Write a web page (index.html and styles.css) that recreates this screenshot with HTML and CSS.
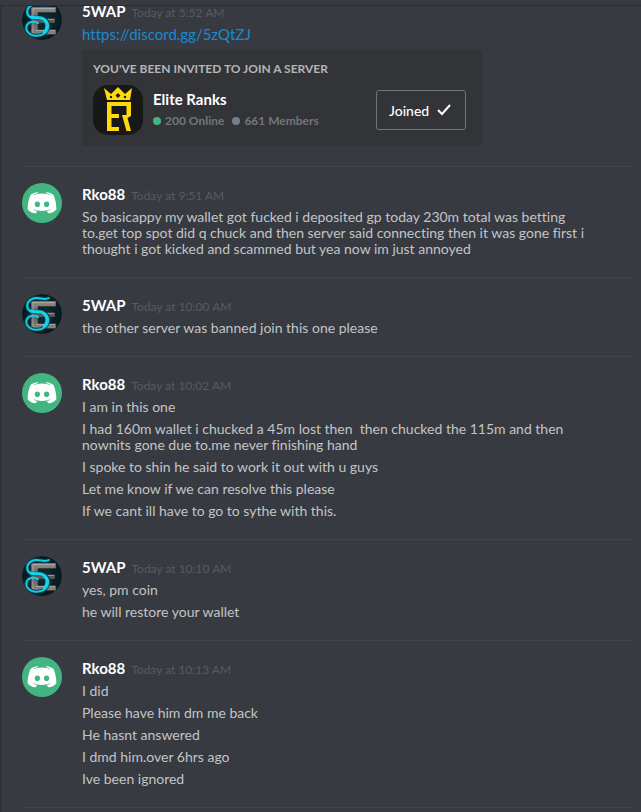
FILE: index.html
```
<!DOCTYPE html>
<html lang="en">
<head>
<meta charset="utf-8">
<meta name="viewport" content="width=device-width, initial-scale=1">
<title>Direct messages</title>
<link rel="stylesheet" href="styles.css">
</head>
<body>
<svg class="sprites" aria-hidden="true">
  <defs>
    <linearGradient id="steel" x1="0" y1="0" x2="0" y2="1">
      <stop offset="0" stop-color="#94918d"/>
      <stop offset=".5" stop-color="#5a5856"/>
      <stop offset="1" stop-color="#8a8681"/>
    </linearGradient>
    <radialGradient id="night">
      <stop offset="0" stop-color="#0a3039"/>
      <stop offset="1" stop-color="#06191f"/>
    </radialGradient>
    <clipPath id="round"><circle cx="20" cy="20" r="20"/></clipPath>
  </defs>
  <symbol id="swap" viewBox="0 0 40 40">
    <g clip-path="url(#round)">
      <circle cx="20" cy="20" r="20" fill="url(#night)"/>
      <path d="M9 7H34V12.500H16V18.500H33V23H16V29.500H34V34.500H9Z" fill="url(#steel)" stroke="#302e2d" stroke-width=".6"/>
      <path d="M11 8.500H33M18 19.500H32M14 30.500H33M11 9V33" fill="none" stroke="#c0bbb4" stroke-width="1" opacity=".6"/>
      <path d="M27 4C22 7 16 2 10 5C4 8 4 14 8 17C12 19 18 16 22 19C27 22 28 28 23 33C18 37 9 37 5 31C3 27 5 23 9 22" fill="none" stroke="#07414e" stroke-width="4"/>
      <path d="M27 4C22 7 16 2 10 5C4 8 4 14 8 17C12 19 18 16 22 19C27 22 28 28 23 33C18 37 9 37 5 31C3 27 5 23 9 22C12 21 14 22 16 23" fill="none" stroke="#14cbe3" stroke-width="2" stroke-linecap="round"/>
      <path d="M9 17C15 19 18 16 22 19.500C26 23 26 28 22 32.500" fill="none" stroke="#17d2ea" stroke-width="3" stroke-linecap="round"/>
    </g>
  </symbol>
  <symbol id="clyde" viewBox="0 0 40 40">
    <circle cx="20" cy="20" r="20" fill="#43b581"/>
    <path d="M15.800 9.300C12.700 9.500 10.200 10.600 8.500 11.900C6.700 16 5.600 20.800 5.600 26.300C7.200 28.700 9.900 30.200 13.700 30.300L15.200 28.200C13.400 27.700 12 26.900 11 25.700C16.500 28.600 23.500 28.600 29 25.700C28 26.900 26.600 27.700 24.800 28.200L26.300 30.300C30.100 30.200 32.800 28.700 34.400 26.300C34.400 20.800 33.300 16 31.500 11.900C29.800 10.600 27.300 9.500 24.200 9.300L23.800 9.900C26.100 10.400 27.800 11.200 29.300 12.400C23.500 9.700 16.500 9.700 10.700 12.400C12.200 11.200 13.900 10.400 16.200 9.900Z" fill="#fff"/>
    <ellipse cx="15.400" cy="21.200" rx="2.600" ry="2.800" fill="#43b581"/>
    <ellipse cx="24.600" cy="21.200" rx="2.600" ry="2.800" fill="#43b581"/>
  </symbol>
</svg>

<header class="topbar"></header>
<main class="chat">
  <article class="group">
    <svg class="avatar" role="img" aria-label="5WAP"><use href="#swap"/></svg>
    <div class="body">
      <h2 class="head"><span class="name">5WAP</span><time class="time">Today at 5:52 AM</time></h2>
      <p class="text"><a class="link" href="https://discord.gg/5zQtZJ">https://discord.gg/5zQtZJ</a></p>
      <section class="invite">
        <h3 class="invite-title">You've been invited to join a server</h3>
        <div class="invite-row">
          <svg class="server-icon" viewBox="0 0 50 50" role="img" aria-label="Elite Ranks">
            <rect width="50" height="50" rx="15" fill="#181818"/>
            <path d="M11 3L18 9L25 2L32 9L39 3L37 15H14Z" fill="#fed90b"/>
            <path d="M25 8L27.500 10.500L25 13L22.500 10.500Z" fill="#181818"/>
            <circle cx="18" cy="12" r="1.200" fill="#181818"/>
            <circle cx="32" cy="12" r="1.200" fill="#181818"/>
            <path d="M14 17H38V31L34.500 33L38 46H33.500L29 30H33.500V21H18.500V29H26V33H18.500V42H26V46H14Z" fill="#fed90b"/>
          </svg>
          <div class="server">
            <div class="server-name">Elite Ranks</div>
            <div class="counts">
              <span class="count online">200 Online</span>
              <span class="count">661 Members</span>
            </div>
          </div>
          <button class="joined" type="button">Joined
            <svg class="check" viewBox="0 0 14 12" aria-hidden="true"><path d="M1 6L5 10L13 1" fill="none" stroke="#fff" stroke-width="2"/></svg>
          </button>
        </div>
      </section>
    </div>
  </article>

  <article class="group">
    <svg class="avatar" role="img" aria-label="Rko88"><use href="#clyde"/></svg>
    <div class="body">
      <h2 class="head"><span class="name">Rko88</span><time class="time">Today at 9:51 AM</time></h2>
      <p class="text">So basicappy my wallet got fucked i deposited gp today 230m total was betting<br>to.get top spot did q chuck and then server said connecting then it was gone first i<br>thought i got kicked and scammed but yea now im just annoyed</p>
    </div>
  </article>

  <article class="group">
    <svg class="avatar" role="img" aria-label="5WAP"><use href="#swap"/></svg>
    <div class="body">
      <h2 class="head"><span class="name">5WAP</span><time class="time">Today at 10:00 AM</time></h2>
      <p class="text">the other server was banned join this one please</p>
    </div>
  </article>

  <article class="group">
    <svg class="avatar" role="img" aria-label="Rko88"><use href="#clyde"/></svg>
    <div class="body">
      <h2 class="head"><span class="name">Rko88</span><time class="time">Today at 10:02 AM</time></h2>
      <p class="text">I am in this one</p>
      <p class="text">I had 160m wallet i chucked a 45m lost then&nbsp; then chucked the 115m and then<br>nownits gone due to.me never finishing hand</p>
      <p class="text">I spoke to shin he said to work it out with u guys</p>
      <p class="text">Let me know if we can resolve this please</p>
      <p class="text">If we cant ill have to go to sythe with this.</p>
    </div>
  </article>

  <article class="group">
    <svg class="avatar" role="img" aria-label="5WAP"><use href="#swap"/></svg>
    <div class="body">
      <h2 class="head"><span class="name">5WAP</span><time class="time">Today at 10:10 AM</time></h2>
      <p class="text">yes, pm coin</p>
      <p class="text">he will restore your wallet</p>
    </div>
  </article>

  <article class="group">
    <svg class="avatar" role="img" aria-label="Rko88"><use href="#clyde"/></svg>
    <div class="body">
      <h2 class="head"><span class="name">Rko88</span><time class="time">Today at 10:13 AM</time></h2>
      <p class="text">I did</p>
      <p class="text">Please have him dm me back</p>
      <p class="text">He hasnt answered</p>
      <p class="text">I dmd him.over 6hrs ago</p>
      <p class="text">Ive been ignored</p>
    </div>
  </article>
</main>
</body>
</html>
```
FILE: styles.css
```
* {
  box-sizing: border-box;
}

body {
  margin: 0;
  min-height: 100vh;
  background: #373a41;
  border-left: 2px solid #303136;
  color: #c3c4c6;
  font-family: Lato, "Open Sans", sans-serif;
  font-size: 14px;
  font-variant-ligatures: none;
  line-height: 16px;
}

.sprites {
  position: absolute;
  width: 0;
  height: 0;
}

.topbar {
  position: absolute;
  top: 0;
  left: 0;
  right: 0;
  height: 6px;
  background: #373a41;
  border-bottom: 1px solid #2b2d31;
}

.chat {
  padding: 0 9px 0 20px;
}

.group {
  display: flex;
  gap: 20px;
  padding: 16px 0 20px;
  border-top: 1px solid #40434a;
}

.group:first-child {
  padding-top: 0;
  border-top: 0;
}

.group:last-child {
  border-bottom: 1px solid #40434a;
}

.avatar {
  flex: none;
  width: 40px;
  height: 40px;
}

.body {
  display: flex;
  flex: 1;
  flex-direction: column;
  gap: 6px;
  min-width: 0;
  padding-top: 4px;
}

.head {
  display: flex;
  align-items: baseline;
  gap: 6px;
  height: 16px;
  margin: 0;
  font-size: 15px;
  line-height: 14px;
}

.name {
  color: #fff;
  font-weight: 700;
}

.time {
  color: #585b60;
  font-size: 12px;
  font-weight: 400;
  line-height: 12px;
}

.text {
  margin: 0;
}

.link {
  display: block;
  color: #1a8ad0;
  font-size: 15px;
  text-decoration: none;
}

.invite {
  max-width: 400px;
  margin-top: 2px;
  padding: 11px 16px 11px 11px;
  border-radius: 3px;
  background: #333438;
}

.invite-title {
  margin: 0 0 8px;
  color: #b5b6b8;
  font-size: 12px;
  font-weight: 700;
  line-height: 16px;
  text-transform: uppercase;
}

.invite-row {
  display: flex;
  align-items: center;
  gap: 10px;
}

.server-icon {
  flex: none;
  width: 50px;
  height: 50px;
}

.server {
  flex: 1;
}

.server-name {
  margin-bottom: 6px;
  color: #fff;
  font-size: 15px;
  font-weight: 700;
}

.counts {
  display: flex;
  gap: 8px;
  color: #73767b;
  font-size: 12px;
  font-weight: 700;
}

.count {
  display: flex;
  align-items: center;
  gap: 4px;
}

.count::before {
  width: 8px;
  height: 8px;
  border-radius: 50%;
  background: #747f8d;
  content: "";
}

.online::before {
  background: #43b581;
}

.joined {
  display: flex;
  align-items: center;
  justify-content: space-between;
  width: 90px;
  height: 40px;
  padding: 0 14px 0 12px;
  border: 1px solid #737478;
  border-radius: 3px;
  background: transparent;
  color: #fff;
  font: 500 14px Lato, "Open Sans", sans-serif;
}

.check {
  width: 14px;
  height: 12px;
}
```
